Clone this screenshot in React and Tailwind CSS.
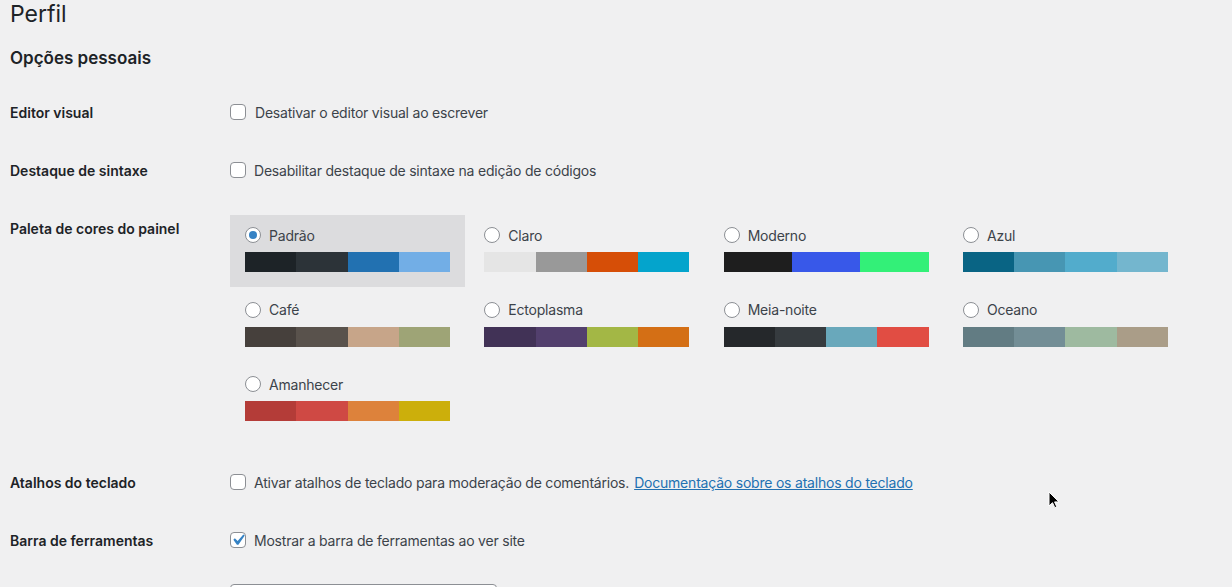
import React from "react";

const palettes = [
  { name: "Padrão", colors: ["#1d2327", "#2c3338", "#2271b1", "#72aee6"], checked: true },
  { name: "Claro", colors: ["#e5e5e5", "#999999", "#d64e07", "#04a4cc"] },
  { name: "Moderno", colors: ["#1e1e1e", "#3858e9", "#33f078"] },
  { name: "Azul", colors: ["#096484", "#4796b3", "#52accc", "#74b6ce"] },
  { name: "Café", colors: ["#46403c", "#59524c", "#c7a589", "#9ea476"] },
  { name: "Ectoplasma", colors: ["#413256", "#523f6d", "#a3b745", "#d46f15"] },
  { name: "Meia-noite", colors: ["#25282b", "#363b3f", "#69a8bb", "#e14d43"] },
  { name: "Oceano", colors: ["#627c83", "#738e96", "#9ebaa0", "#aa9d88"] },
  { name: "Amanhecer", colors: ["#b43c38", "#cf4944", "#dd823b", "#ccaf0b"] },
];

function Checkbox({ checked }) {
  return (
    <span className="relative w-4 h-4 shrink-0 rounded-[4px] border border-[#8c8f94] bg-white">
      {checked && (
        <svg className="absolute -left-[4px] -top-[4px]" width="22" height="22" viewBox="0 0 20 20">
          <path d="M14.83 4.89l1.34.94-5.81 8.38H9.02L5.78 9.67l1.34-1.25 2.57 2.4z" fill="#3582c4" />
        </svg>
      )}
    </span>
  );
}

function Radio({ checked }) {
  return (
    <span className="w-4 h-4 shrink-0 rounded-full border border-[#8c8f94] bg-white flex items-center justify-center">
      {checked && <span className="w-2 h-2 rounded-full bg-[#3582c4]" />}
    </span>
  );
}

function Row({ label, children, className }) {
  return (
    <div className={"flex items-center h-5 " + className}>
      <div className="w-[220px] shrink-0 text-[14px] font-semibold text-[#1d2327]">{label}</div>
      <div className="flex items-center text-[14px] tracking-[-0.21px] text-[#3c434a]">{children}</div>
    </div>
  );
}

export default function App() {
  return (
    <div className="relative w-[1232px] h-[587px] overflow-hidden bg-[#f0f0f1] pl-[10px] font-['Inter',sans-serif]">
      <h1 className="text-[23px] leading-[30px] text-[#1d2327] -mt-[1px]">Perfil</h1>
      <h2 className="mt-[18px] text-[17px] leading-[22px] font-semibold text-[#1d2327]">Opções pessoais</h2>

      <Row label="Editor visual" className="mt-[33px]">
        <Checkbox />
        <span className="ml-[9px]">Desativar o editor visual ao escrever</span>
      </Row>

      <Row label="Destaque de sintaxe" className="mt-[38px]">
        <Checkbox />
        <span className="ml-[8px]">Desabilitar destaque de sintaxe na edição de códigos</span>
      </Row>

      <div className="flex mt-[35px]">
        <div className="w-[220px] shrink-0 pt-[4px] leading-5 text-[14px] font-semibold text-[#1d2327]">
          Paleta de cores do painel
        </div>
        <div className="grid grid-cols-[repeat(4,235px)] gap-x-[4.33px] gap-y-[2.5px]">
          {palettes.map((p) => (
            <div
              key={p.name}
              className={"h-[72px] px-[15px] pt-[12px] " + (p.checked ? "bg-[#dcdcde]" : "")}
            >
              <div className="flex items-center h-4">
                <Radio checked={p.checked} />
                <span className="ml-2 text-[14px] tracking-[-0.21px] text-[#3c434a]">{p.name}</span>
              </div>
              <div className="flex h-5 mt-[9px]">
                {p.colors.map((c) => (
                  <div key={c} className="flex-1" style={{ background: c }} />
                ))}
              </div>
            </div>
          ))}
        </div>
      </div>

      <Row label="Atalhos do teclado" className="mt-[36px]">
        <Checkbox />
        <span className="ml-[8px]">Ativar atalhos de teclado para moderação de comentários.</span>
        <a href="#" className="ml-[5px] text-[#2271b1] underline">Documentação sobre os atalhos do teclado</a>
      </Row>

      <Row label="Barra de ferramentas" className="mt-[38px]">
        <Checkbox checked />
        <span className="ml-[8px]">Mostrar a barra de ferramentas ao ver site</span>
      </Row>

      <div className="ml-[220px] mt-[34px] w-[267px] h-[30px] rounded-[4px] border border-[#8c8f94] bg-white" />

      <svg className="absolute left-[1048px] top-[491px]" width="12" height="18" viewBox="0 0 12 18">
        <path d="M1 1v14l3.5-3.3 2.3 5 2-.9-2.2-4.9H11z" fill="#000" stroke="#fff" strokeWidth="1" />
      </svg>
    </div>
  );
}
